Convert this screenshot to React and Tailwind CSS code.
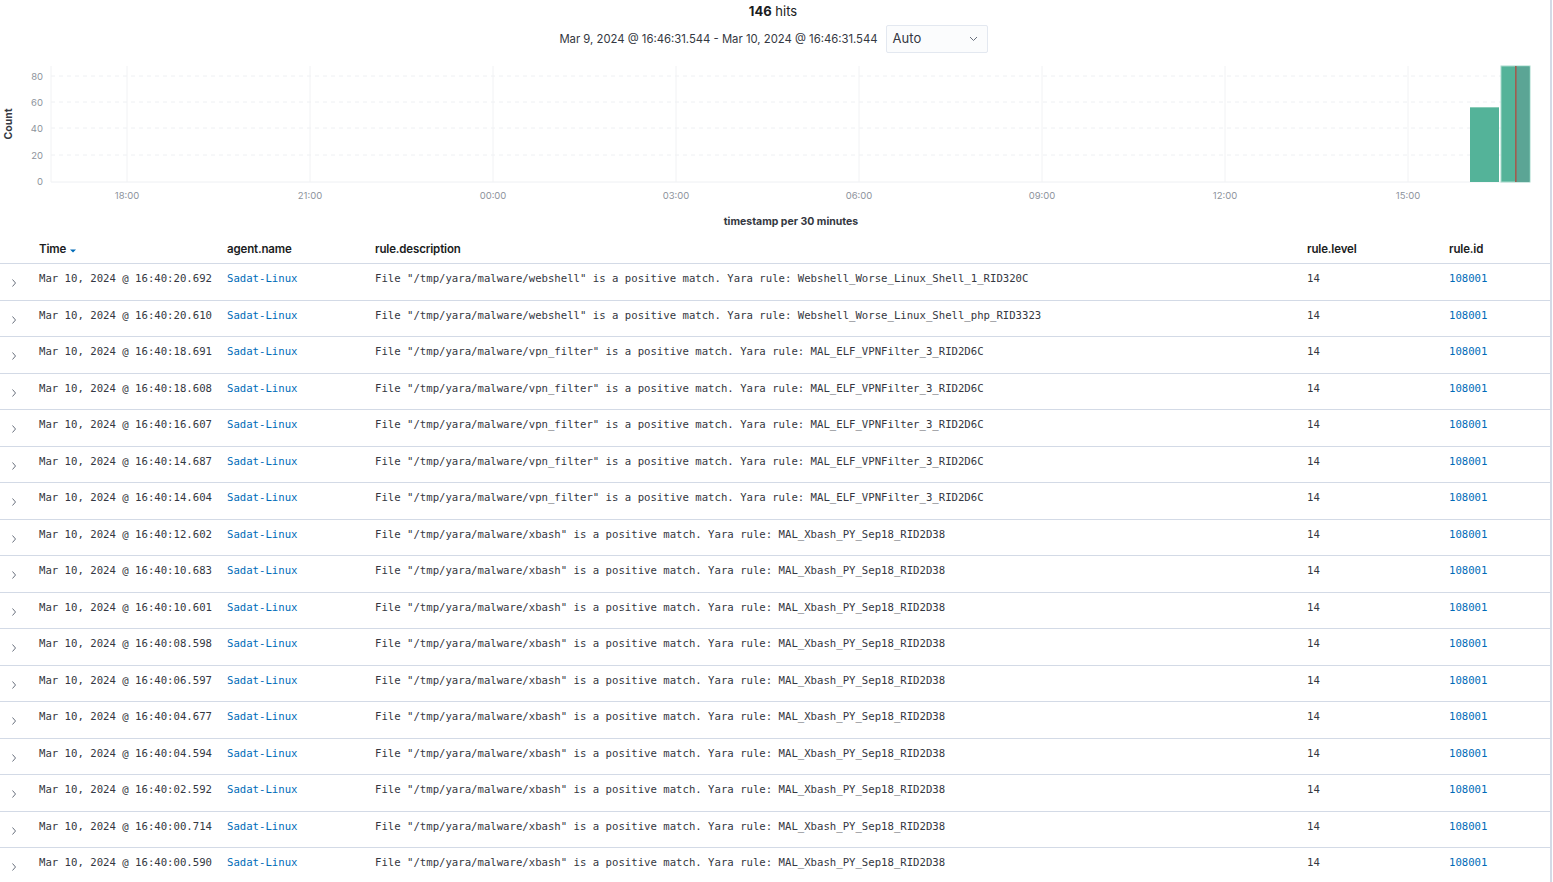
const ROWS = [
  ['16:40:20.692', 'webshell', 'Webshell_Worse_Linux_Shell_1_RID320C'],
  ['16:40:20.610', 'webshell', 'Webshell_Worse_Linux_Shell_php_RID3323'],
  ['16:40:18.691', 'vpn_filter', 'MAL_ELF_VPNFilter_3_RID2D6C'],
  ['16:40:18.608', 'vpn_filter', 'MAL_ELF_VPNFilter_3_RID2D6C'],
  ['16:40:16.607', 'vpn_filter', 'MAL_ELF_VPNFilter_3_RID2D6C'],
  ['16:40:14.687', 'vpn_filter', 'MAL_ELF_VPNFilter_3_RID2D6C'],
  ['16:40:14.604', 'vpn_filter', 'MAL_ELF_VPNFilter_3_RID2D6C'],
  ['16:40:12.602', 'xbash', 'MAL_Xbash_PY_Sep18_RID2D38'],
  ['16:40:10.683', 'xbash', 'MAL_Xbash_PY_Sep18_RID2D38'],
  ['16:40:10.601', 'xbash', 'MAL_Xbash_PY_Sep18_RID2D38'],
  ['16:40:08.598', 'xbash', 'MAL_Xbash_PY_Sep18_RID2D38'],
  ['16:40:06.597', 'xbash', 'MAL_Xbash_PY_Sep18_RID2D38'],
  ['16:40:04.677', 'xbash', 'MAL_Xbash_PY_Sep18_RID2D38'],
  ['16:40:04.594', 'xbash', 'MAL_Xbash_PY_Sep18_RID2D38'],
  ['16:40:02.592', 'xbash', 'MAL_Xbash_PY_Sep18_RID2D38'],
  ['16:40:00.714', 'xbash', 'MAL_Xbash_PY_Sep18_RID2D38'],
  ['16:40:00.590', 'xbash', 'MAL_Xbash_PY_Sep18_RID2D38'],
];

const COLS = 'grid grid-cols-[39px_188px_148px_932px_142px_1fr]';
const MONO = "font-['DejaVu_Sans_Mono',monospace] text-[10.65px] leading-[12px]";

// chart coordinates are page y minus 53
const Y0 = 53;
const Y_TICKS = [[80, 76], [60, 102], [40, 128], [20, 155], [0, 181]];
const X_TICKS = [['18:00', 127], ['21:00', 310], ['00:00', 493], ['03:00', 676], ['06:00', 859], ['09:00', 1042], ['12:00', 1225], ['15:00', 1408]];

function Histogram() {
  return (
    <svg width="1549" height="180" className="block" style={{ fontFamily: 'Inter, sans-serif' }}>
      {Y_TICKS.slice(0, 4).map(([, y]) => (
        <line key={y} x1="51" x2="1530" y1={y - Y0} y2={y - Y0} stroke="#eef0f3" strokeDasharray="4 4" />
      ))}
      <line x1="51" x2="1530" y1={182 - Y0} y2={182 - Y0} stroke="#eef0f3" />
      <line x1="51" x2="51" y1={66 - Y0} y2={182 - Y0} stroke="#f1f2f4" />
      {X_TICKS.map(([, x]) => (
        <line key={x} x1={x} x2={x} y1={66 - Y0} y2={182 - Y0} stroke="#f1f2f4" />
      ))}
      {Y_TICKS.map(([v, y]) => (
        <text key={v} x="43" y={y - Y0 + 3.5} fontSize="9.5" fill="#8d939c" textAnchor="end">{v}</text>
      ))}
      {X_TICKS.map(([t, x]) => (
        <text key={t} x={x} y={195 - Y0 + 3.5} fontSize="9.5" fill="#8d939c" textAnchor="middle">{t}</text>
      ))}
      <text x="0" y="0" fontSize="10.5" fontWeight="700" fill="#343741" textAnchor="middle"
        transform={`translate(12 ${124 - Y0}) rotate(-90)`}>Count</text>
      <text x="791" y={221 - Y0 + 4} fontSize="10.5" fontWeight="700" fill="#343741" textAnchor="middle">timestamp per 30 minutes</text>
      {/* bars */}
      <rect x="1470" y={107 - Y0} width="29" height="75" fill="#54b399" />
      <line x1="1470" x2="1499" y1={107.5 - Y0} y2={107.5 - Y0} stroke="#8ccdb9" />
      <rect x="1501" y={66 - Y0} width="29" height="116" fill="#54b399" stroke="#a6dacb" strokeWidth="1" />
      <rect x="1516" y={66.5 - Y0} width="13.5" height="115.5" fill="#5ba595" />
      <rect x="1515" y={66 - Y0} width="1.6" height="116" fill="#a15c4f" />
    </svg>
  );
}

function Chevron() {
  return (
    <svg width="8" height="10" viewBox="0 0 8 10" className="block">
      <path d="M2.5 1.5 L5.5 5 L2.5 8.5" fill="none" stroke="#69707d" strokeWidth="1" />
    </svg>
  );
}

export default function App() {
  return (
    <div className="w-[1552px] min-h-[882px] bg-white border-r-2 border-[#d3dae6] font-['Inter',sans-serif] text-[#1a1c21] overflow-hidden">
      <div className="pt-[3px] pr-[4px] text-center text-[13px] leading-4">
        <span className="font-bold">146</span> hits
      </div>
      <div className="mt-[6px] flex items-center justify-center gap-2 pr-[3px]">
        <span className="text-[11.3px] text-[#343741]">Mar 9, 2024 @ 16:46:31.544 - Mar 10, 2024 @ 16:46:31.544</span>
        <div className="w-[102px] h-[28px] border border-[#e3e8f0] bg-[#fbfcfd] rounded-[2px] flex items-center justify-between pl-[6px] pr-[9px]">
          <span className="text-[13px] text-[#343741]">Auto</span>
          <svg width="9" height="6" viewBox="0 0 9 6">
            <path d="M1 1 L4.5 4.5 L8 1" fill="none" stroke="#69707d" strokeWidth="1" />
          </svg>
        </div>
      </div>
      <Histogram />
      <div className={`${COLS} h-[31px] border-b border-[#d3dae6] items-start pt-[9px] text-[11.5px] leading-[14px] font-semibold tracking-[-0.15px]`}>
        <div />
        <div className="flex items-center gap-[3px]">
          Time
          <svg width="8" height="6" viewBox="0 0 8 6" className="mt-[3px]">
            <path d="M1 1.5 H7 L4 4.5 Z" fill="#006bb8" />
          </svg>
        </div>
        <div>agent.name</div>
        <div>rule.description</div>
        <div>rule.level</div>
        <div>rule.id</div>
      </div>
      {ROWS.map(([time, file, rule]) => (
        <div key={time} className={`${COLS} h-[36.5px] border-b border-[#d3dae6] items-start text-[#343741] ${MONO}`}>
          <div className="pl-[10px] pt-[14px]"><Chevron /></div>
          <div className="pt-[9px] whitespace-pre">Mar 10, 2024 @ {time}</div>
          <div className="pt-[9px] text-[#006bb8]">Sadat-Linux</div>
          <div className="pt-[9px] whitespace-pre">{`File "/tmp/yara/malware/${file}" is a positive match. Yara rule: ${rule}`}</div>
          <div className="pt-[9px]">14</div>
          <div className="pt-[9px] text-[#006bb8]">108001</div>
        </div>
      ))}
    </div>
  );
}
